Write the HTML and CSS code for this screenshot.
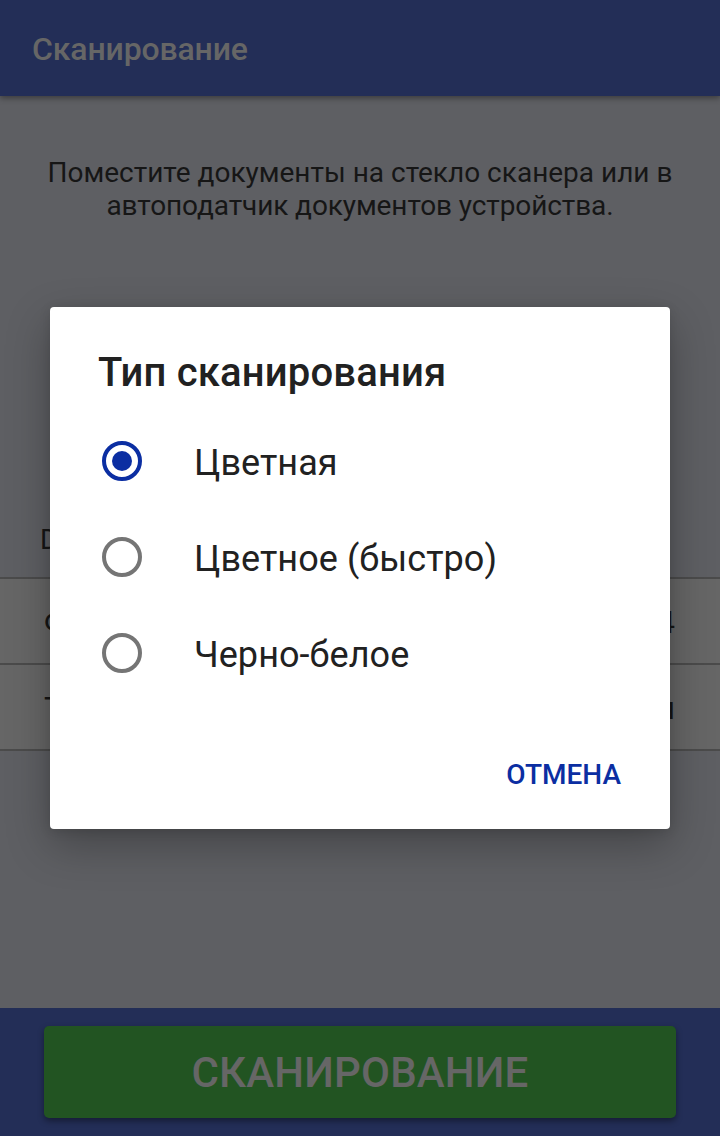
FILE: index.html
```html
<!DOCTYPE html>
<html lang="ru">
<head>
<meta charset="utf-8">
<title>Сканирование</title>
<link rel="stylesheet" href="styles.css">
</head>
<body>
<div class="screen">
  <header class="app-bar"><h1 class="app-title">Сканирование</h1></header>
  <main class="content">
    <p class="hint">Поместите документы на стекло сканера или в <span class="hint-end">автоподатчик документов устройства.</span></p>
    <div class="device">D</div>
    <div class="settings">
      <div class="setting"><span>Ф</span><span>A4</span></div>
      <div class="setting"><span>Тип</span><span>Цветная</span></div>
    </div>
  </main>
  <footer class="bottom-bar"><button class="scan-button">СКАНИРОВАНИЕ</button></footer>
  <div class="overlay">
    <section class="dialog" role="dialog">
      <h2 class="dialog-title">Тип сканирования</h2>
      <div class="options">
        <div class="option"><span class="radio radio-checked"></span><span class="label">Цветная</span></div>
        <div class="option"><span class="radio"></span><span class="label">Цветное (быстро)</span></div>
        <div class="option"><span class="radio"></span><span class="label">Черно-белое</span></div>
      </div>
      <div class="actions"><button class="cancel">ОТМЕНА</button></div>
    </section>
  </div>
</div>
</body>
</html>
```
FILE: styles.css
```css
* { box-sizing: border-box; }
body { margin: 0; font-family: Roboto, sans-serif; }
h1, h2, p { margin: 0; }
button { border: 0; padding: 0; background: none; font-family: inherit; }
.screen { position: relative; width: 720px; height: 1136px; display: flex; flex-direction: column; overflow: hidden; background: #5e5f63; }
.app-bar { height: 96px; flex: none; display: flex; align-items: center; padding: 2px 32px 0; background: #232e57; box-shadow: 0 2px 6px rgba(0, 0, 0, .4); }
.app-title { font-size: 32px; line-height: 38px; font-weight: 500; letter-spacing: -.15px; color: #666; }
.content { flex: 1; display: flex; flex-direction: column; }
.hint { padding: 60px 40px 0; font-size: 28px; line-height: 33px; text-align: center; color: #161616; }
.hint-end { letter-spacing: -.1px; }
.device { margin-top: 301px; padding-left: 40px; height: 54px; font-size: 28px; line-height: 33px; color: #161616; }
.settings { border-top: 2px solid #4b4b4b; }
.setting { height: 86px; display: flex; justify-content: space-between; align-items: center; padding: 2px 45px 0 44px; border-bottom: 2px solid #4b4b4b; background: #666; font-size: 32px; line-height: 38px; color: #161616; }
.bottom-bar { height: 128px; flex: none; padding: 18px 44px; background: #232e57; }
.scan-button { display: block; width: 632px; height: 92px; border-radius: 5px; background: #225422; box-shadow: 0 3px 6px rgba(0, 0, 0, .4); font-size: 42px; font-weight: 500; letter-spacing: .15px; color: #666; }
.overlay { position: absolute; inset: 0; display: flex; align-items: center; justify-content: center; }
.dialog { width: 620px; height: 522px; padding: 42px 48px 0; border-radius: 4px; background: #fff; box-shadow: 0 16px 44px rgba(0, 0, 0, .28), 0 2px 12px rgba(0, 0, 0, .12); }
.dialog-title { font-size: 40px; line-height: 47px; font-weight: 500; letter-spacing: .17px; color: #212121; }
.options { margin-top: 17px; }
.option { height: 96px; display: flex; align-items: center; padding-left: 4px; }
.radio { width: 40px; height: 40px; border: 4px solid #757575; border-radius: 50%; display: flex; align-items: center; justify-content: center; }
.radio-checked { border-color: #0b2ea2; }
.radio-checked::before { content: ""; width: 20px; height: 20px; border-radius: 50%; background: #0b2ea2; }
.label { margin-left: 52px; padding-top: 4px; font-size: 36px; line-height: 42px; letter-spacing: .06px; color: #212121; }
.actions { display: flex; justify-content: flex-end; margin-top: 57px; padding-right: 1px; }
.cancel { font-size: 28px; line-height: 33px; font-weight: 500; color: #0b2ea2; }
```
